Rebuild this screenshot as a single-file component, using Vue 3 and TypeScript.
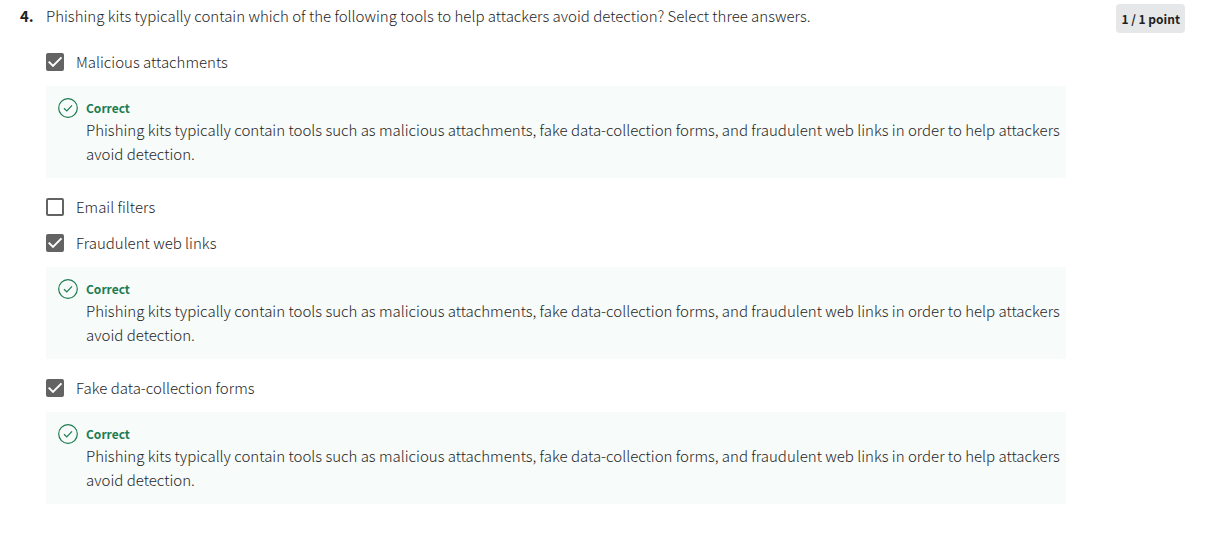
<script setup lang="ts">
import { ref } from 'vue'

interface Option {
  id: string
  label: string
  checked: boolean
  feedback?: string
}

const explanation =
  'Phishing kits typically contain tools such as malicious attachments, fake data-collection forms, and fraudulent web links in order to help attackers avoid detection.'

const options = ref<Option[]>([
  { id: 'attachments', label: 'Malicious attachments', checked: true, feedback: explanation },
  { id: 'filters', label: 'Email filters', checked: false },
  { id: 'links', label: 'Fraudulent web links', checked: true, feedback: explanation },
  { id: 'forms', label: 'Fake data-collection forms', checked: true, feedback: explanation },
])
</script>

<template>
  <main class="question">
    <span class="number">4.</span>
    <fieldset class="body" aria-labelledby="prompt">
      <p id="prompt" class="prompt">
        Phishing kits typically contain which of the following tools to help attackers avoid detection? Select three answers.
      </p>
      <div v-for="option in options" :key="option.id" class="option">
        <label class="choice" :for="option.id">
          <span class="tick">
            <input :id="option.id" v-model="option.checked" type="checkbox" />
            <svg v-if="option.checked" viewBox="0 0 18 18" aria-hidden="true">
              <path d="M2.7 8.6 7 12.9 15.5 4.4" fill="none" stroke="#fff" stroke-width="2" />
            </svg>
          </span>
          <span>{{ option.label }}</span>
        </label>
        <section v-if="option.feedback" class="feedback">
          <svg class="status" viewBox="0 0 20 20" aria-hidden="true">
            <circle cx="10" cy="10" r="9.3" />
            <path d="M6 10.3 8.8 13 14 7.3" />
          </svg>
          <div>
            <strong class="verdict">Correct</strong>
            <p class="explanation">{{ option.feedback }}</p>
          </div>
        </section>
      </div>
    </fieldset>
    <span class="points">1 / 1 point</span>
  </main>
</template>

<style>
body {
  margin: 0;
  background: #fff;
}
</style>

<style scoped>
.question {
  display: grid;
  grid-template-columns: 26px minmax(0, 1fr) auto;
  align-items: start;
  padding: 4px 21px 24px 20px;
  color: #1f1f1f;
  font-family: "Noto Sans CJK SC", "Noto Sans", sans-serif;
  font-size: 15px;
  font-weight: 300;
  line-height: 24px;
}
.number {
  font-weight: 700;
}
.body {
  min-width: 0;
  margin: 0;
  padding: 0;
  border: 0;
}
.prompt {
  margin: 0 0 16px;
}
.choice {
  display: flex;
  align-items: center;
  gap: 12px;
  height: 36px;
}
.tick {
  display: grid;
  width: 18px;
  height: 18px;
}
.tick > * {
  grid-area: 1 / 1;
  width: 18px;
  height: 18px;
}
.tick svg {
  pointer-events: none;
}
input {
  box-sizing: border-box;
  margin: 0;
  appearance: none;
  border: 2px solid #636363;
  border-radius: 2px;
  background: #fff;
}
input:checked {
  background: #636363;
}
.feedback {
  display: flex;
  gap: 8px;
  margin: 6px 0 11px;
  padding: 11px 4px 12px 12px;
  background: #f7fbfa;
}
.status {
  flex: none;
  width: 20px;
  height: 20px;
  margin-top: 1px;
  fill: none;
  stroke: #1d7c50;
  stroke-width: 1.2;
}
.verdict {
  display: block;
  color: #1d7c50;
  font-size: 12px;
  font-weight: 700;
  line-height: 21px;
}
.explanation {
  margin: 0;
}
.points {
  margin-left: 50px;
  padding: 3px 5px 2px;
  border-radius: 4px;
  background: #e5e7e8;
  font-size: 12px;
  font-weight: 700;
}
</style>
